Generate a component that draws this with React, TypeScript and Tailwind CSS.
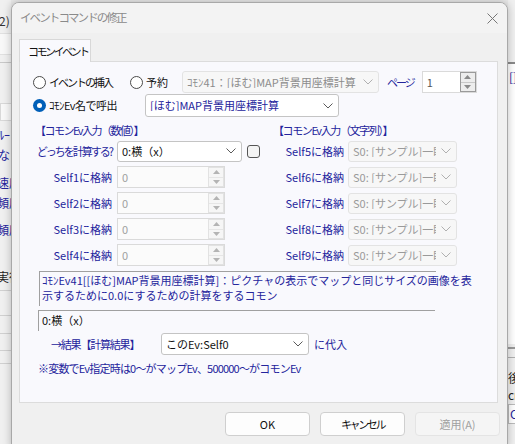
import React from "react";

function Chevron({ c = "#6b6b6b" }: { c?: string }) {
  return (
    <svg width="10" height="6" viewBox="0 0 10 6">
      <polyline points="0.5,0.5 5,5 9.5,0.5" fill="none" stroke={c} strokeWidth="1" />
    </svg>
  );
}

function Combo({
  className,
  text,
  textCls,
  disabled,
}: {
  className: string;
  text: string;
  textCls: string;
  disabled?: boolean;
}) {
  return (
    <div
      className={`flex items-center shrink-0 rounded-[3px] border ${
        disabled ? "border-[#e3e3e3] bg-[#f7f7f7]" : "border-[#c4c4c4] bg-white"
      } ${className}`}
    >
      <div className={`flex-1 overflow-hidden whitespace-nowrap pl-[4px] ${textCls}`}>{text}</div>
      <div className="w-[20px] shrink-0 flex items-center justify-center">
        <Chevron c={disabled ? "#b0b0b0" : "#5a5a5a"} />
      </div>
    </div>
  );
}

function Tri({ up, c }: { up?: boolean; c: string }) {
  return (
    <svg width="7" height="4" viewBox="0 0 7 4">
      {up ? <polygon points="0,4 3.5,0 7,4" fill={c} /> : <polygon points="0,0 3.5,4 7,0" fill={c} />}
    </svg>
  );
}

function Spin({ className, value, active }: { className: string; value: string; active?: boolean }) {
  return (
    <div className={`flex shrink-0 border border-[#dadada] ${active ? "bg-white" : "bg-[#fbfbfb]"} ${className}`}>
      <div className={`flex-1 pl-[4px] flex items-center ${active ? "text-[#555]" : "text-[#a0a0a0]"}`}>{value}</div>
      <div
        className={`w-[16px] flex flex-col border ${
          active ? "border-[#9a9a9a] bg-[#ededed]" : "border-[#e2e2e2] bg-[#f6f6f6]"
        }`}
      >
        <div className={`flex-1 flex items-center justify-center border-b ${active ? "border-[#c8c8c8]" : "border-[#e6e6e6]"}`}>
          <Tri up c={active ? "#8a8a8a" : "#b4b4b4"} />
        </div>
        <div className="flex-1 flex items-center justify-center">
          <Tri c={active ? "#8a8a8a" : "#b4b4b4"} />
        </div>
      </div>
    </div>
  );
}

function Radio({ checked }: { checked?: boolean }) {
  return checked ? (
    <div className="w-[13px] h-[13px] rounded-full bg-[#005fb8] flex items-center justify-center shrink-0">
      <div className="w-[5px] h-[5px] rounded-full bg-white" />
    </div>
  ) : (
    <div className="w-[13px] h-[13px] rounded-full border border-[#4a4a4a] bg-white shrink-0" />
  );
}

const N = "text-[#24249c]";

export default function App() {
  const selfL = ["Self1に格納", "Self2に格納", "Self3に格納", "Self4に格納"];
  const selfR = ["Self5に格納", "Self6に格納", "Self7に格納", "Self8に格納", "Self9に格納"];
  return (
    <div className="relative w-[515px] h-[444px] overflow-hidden bg-[#e9e9e9] font-['Noto_Sans_CJK_JP',sans-serif] text-[11px] leading-none whitespace-nowrap">
      {/* background window left */}
      <div className="absolute left-0 top-0 w-[11px] h-[444px] overflow-hidden bg-[#f0f0f0] text-[12px]">
        <div className="absolute left-[-1px] top-[15px] text-[#333]">2)</div>
        <div className="absolute left-0 top-[33px] w-[12px] h-[22px] bg-[#f8f8f8] border-y border-[#e0e0e0]" />
        <div className="absolute left-0 top-[62px] w-[12px] h-[1px] bg-[#c8c8c8]" />
        <div className="absolute left-0 top-[103px] w-[12px] h-[18px] bg-[#f8f8f8] border border-[#d8d8d8]" />
        <div className={`absolute left-[-2px] top-[129px] ${N}`}>ﾙｰ</div>
        <div className={`absolute left-[-2px] top-[149px] ${N}`}>なし</div>
        <div className={`absolute left-[-3px] top-[177px] ${N}`}>速度</div>
        <div className={`absolute left-[-3px] top-[197px] ${N}`}>頻度</div>
        <div className={`absolute left-[-3px] top-[224px] ${N}`}>頻度</div>
        <div className="absolute left-[-3px] top-[271px] text-[#222]">実行</div>
        <div className="absolute left-0 top-[290px] w-[12px] h-[1px] bg-[#d0d0d0]" />
        <div className="absolute left-0 top-[315px] w-[12px] h-[1px] bg-[#d0d0d0]" />
        <div className="absolute left-0 top-[333px] w-[12px] h-[1px] bg-[#d0d0d0]" />
        <div className="absolute left-0 top-[350px] w-[12px] h-[1px] bg-[#d0d0d0]" />
        <div className="absolute left-0 top-[363px] w-[12px] h-[1px] bg-[#d0d0d0]" />
      </div>
      {/* background window right */}
      <div className="absolute left-[508px] top-0 w-[7px] h-[444px] overflow-hidden bg-[#f0f0f0] text-[12px]">
        <div className="absolute left-0 top-[62px] w-[10px] h-[2px] bg-[#8a8a8a]" />
        <div className="absolute left-0 top-[64px] w-[10px] h-[280px] bg-white" />
        <div className={`absolute left-[1px] top-[71px] ${N}`}>[]</div>
        <div className="absolute left-0 top-[347px] w-[10px] h-[2px] bg-[#9a9a9a]" />
        <div className="absolute left-0 top-[357px] w-[10px] h-[1px] bg-[#b0b0b0]" />
        <div className="absolute left-0 top-[372px] text-[#222]">後</div>
        <div className="absolute left-0 top-[389px] text-[#222]">cr</div>
        <div className="absolute left-0 top-[404px] w-[10px] h-[20px] border border-[#bbb] bg-white text-[#24249c] flex items-center pl-[1px]">C</div>
      </div>

      {/* dialog */}
      <div className="absolute left-[11px] top-[2px] w-[497px] h-[450px] rounded-[8px] border border-[#a8a8a8] bg-[#f0f0f0] shadow-[0_0_8px_rgba(0,0,0,0.25)] flex flex-col overflow-hidden">
        <div className="h-[30px] bg-[#f3f3f3] flex items-center justify-between pl-[8px] pr-[9px] shrink-0">
          <span className="text-[#8a8a8a] text-[11.5px] tracking-[-1.9px]">イベントコマンドの修正</span>
          <svg width="11" height="11" viewBox="0 0 11 11">
            <line x1="0.5" y1="0.5" x2="10.5" y2="10.5" stroke="#777" strokeWidth="1" />
            <line x1="10.5" y1="0.5" x2="0.5" y2="10.5" stroke="#777" strokeWidth="1" />
          </svg>
        </div>
        <div className="flex flex-col pl-[7px] pt-[6px]">
          {/* tab */}
          <div className="relative z-10 w-[72px] h-[23px] bg-[#f9f9fd] border border-b-0 border-[#d8d8d8] flex items-center pl-[8px] text-[#111] tracking-[-2.5px]">
            コモンイベント
          </div>
          {/* panel */}
          <div className="mt-[-1px] w-[479px] h-[342px] border border-[#dcdcdc] bg-[#f9f9fd] flex flex-col">
            {/* row1 */}
            <div className="flex items-center h-[24px] mt-[8px] pl-[13px]">
              <div className="w-[97px] flex items-center shrink-0">
                <Radio />
                <span className="ml-[3px] text-[#111] tracking-[-2px]">イベントの挿入</span>
              </div>
              <div className="w-[52px] flex items-center shrink-0">
                <Radio />
                <span className="ml-[3px] text-[#111]">予約</span>
              </div>
              <Combo className="w-[197px] h-[22px]" text="ｺﾓﾝ41：[ほむ]MAP背景用座標計算" textCls="text-[#8c8c8c]" disabled />
              <span className={`ml-[8px] tracking-[-2px] ${N}`}>ページ</span>
              <Spin className="ml-[8px] w-[55px] h-[22px]" value="1" active />
            </div>
            {/* row2 */}
            <div className="flex items-center h-[23px] pl-[13px]">
              <div className="w-[112px] flex items-center shrink-0">
                <Radio checked />
                <span className="ml-[3px] text-[#111] tracking-[-0.5px]">ｺﾓﾝEv名で呼出</span>
              </div>
              <Combo className="w-[194px] h-[23px]" text="[ほむ]MAP背景用座標計算" textCls={N} />
            </div>
            {/* headers + columns */}
            <div className="flex mt-[6px] pl-[15px]">
              <div className="w-[238px] flex flex-col shrink-0">
                <div className={`h-[14px] flex items-center tracking-[-1.5px] ${N}`}>【コモンEv入力（数値）】</div>
                <div className="flex flex-col gap-[4px] mt-[3px]">
                  <div className="flex items-center h-[22px]">
                    <div className={`w-[77px] flex justify-end tracking-[-2px] ${N}`}>どっちを計算する?</div>
                    <Combo className="ml-[5px] w-[125px] h-[21px]" text="0:横（x）" textCls="text-[#111]" />
                    <div className="ml-[5px] w-[13px] h-[13px] rounded-[3px] border border-[#555] bg-[#f4f4f4]" />
                  </div>
                  {selfL.map((s) => (
                    <div key={s} className="flex items-center h-[22px]">
                      <div className={`w-[77px] flex justify-end ${N}`}>{s}</div>
                      <Spin className="ml-[5px] w-[108px] h-[22px]" value="0" />
                    </div>
                  ))}
                </div>
              </div>
              <div className="flex flex-col">
                <div className={`h-[14px] flex items-center tracking-[-1.4px] ${N}`}>【コモンEv入力（文字列）】</div>
                <div className="flex flex-col gap-[4px] mt-[3px]">
                  {selfR.map((s) => (
                    <div key={s} className="flex items-center h-[22px]">
                      <div className={`w-[71px] flex justify-end ${N}`}>{s}</div>
                      <Combo
                        className="ml-[4px] w-[109px] h-[21px]"
                        text="S0: [サンプル]一眼"
                        textCls="text-[#9a9a9a]"
                        disabled
                      />
                    </div>
                  ))}
                </div>
              </div>
            </div>
            {/* description */}
            <div className={`ml-[19px] mt-[5px] w-[397px] h-[35px] border-t border-l border-[#a0a0a0] pl-[2px] pt-[3px] flex flex-col gap-[4px] ${N}`}>
              <div>ｺﾓﾝEv41[[ほむ]MAP背景用座標計算]：ピクチャの表示でマップと同じサイズの画像を表</div>
              <div>示するために0.0にするための計算をするコモン</div>
            </div>
            <div className="ml-[18px] mt-[4px] w-[397px] h-[21px] border-t border-l border-[#a0a0a0] pl-[3px] pt-[4px] text-[#111]">
              0:横（x）
            </div>
            {/* result */}
            <div className="flex items-center h-[22px] mt-[2px] pl-[31px]">
              <span className={`w-[110px] shrink-0 tracking-[-1.2px] ${N}`}>→結果【計算結果】</span>
              <Combo className="w-[148px] h-[22px]" text="このEv:Self0" textCls="text-[#111]" />
              <span className={`ml-[5px] ${N}`}>に代入</span>
            </div>
            <div className={`mt-[8px] pl-[18px] tracking-[-0.8px] ${N}`}>※変数でEv指定時は0～がマップEv、500000～がコモンEv</div>
          </div>
          {/* buttons */}
          <div className="flex justify-end gap-[10px] mt-[9px] pr-[7px]">
            <div className="w-[85px] h-[24px] rounded-[4px] border border-[#cfcfcf] bg-[#fdfdfd] flex items-center justify-center text-[#111]">OK</div>
            <div className="w-[85px] h-[24px] rounded-[4px] border border-[#cfcfcf] bg-[#fdfdfd] flex items-center justify-center text-[#111] tracking-[-2.4px]">キャンセル</div>
            <div className="w-[85px] h-[24px] rounded-[4px] border border-[#e4e4e4] bg-[#f5f5f5] flex items-center justify-center text-[#a0a0a0]">適用(A)</div>
          </div>
        </div>
      </div>
    </div>
  );
}
